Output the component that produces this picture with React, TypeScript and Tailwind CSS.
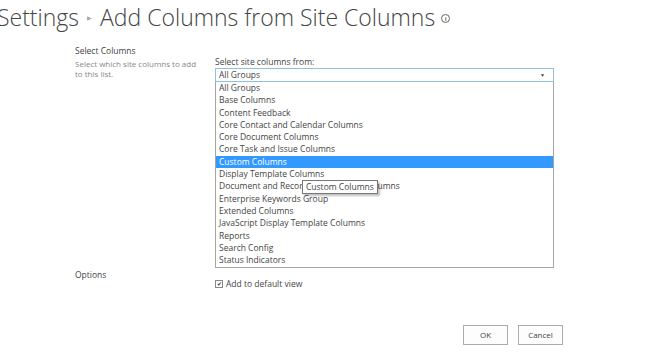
const GROUPS = [
  "All Groups",
  "Base Columns",
  "Content Feedback",
  "Core Contact and Calendar Columns",
  "Core Document Columns",
  "Core Task and Issue Columns",
  "Custom Columns",
  "Display Template Columns",
  "Document and Record Management Columns",
  "Enterprise Keywords Group",
  "Extended Columns",
  "JavaScript Display Template Columns",
  "Reports",
  "Search Config",
  "Status Indicators",
];

const SELECTED = "Custom Columns";

export default function App() {
  return (
    <div className="h-[359px] w-[650px] overflow-hidden bg-white font-['Open_Sans',sans-serif] text-[#444]">
      {/* Page title */}
      <div className="ml-[-3px] flex items-center text-[23px] font-light leading-[30px] text-[#444]">
        <span>Settings</span>
        <span className="mx-[8px] mt-[3px] text-[6px] text-[#aaa]">▶</span>
        <span>Add Columns from Site Columns</span>
        <span className="ml-[6px] mt-[4px] flex h-[9px] w-[9px] items-center justify-center rounded-full border border-[#666] text-[6px] font-bold leading-none text-[#666]">
          i
        </span>
      </div>

      <div className="mt-[12px] grid grid-cols-[140px_339px] pl-[75px] text-[8.5px]">
        {/* Select Columns */}
        <div>
          <div className="leading-[12px] text-[#444]">Select Columns</div>
          <div className="mt-[2px] w-[125px] text-[8px] leading-[10px] text-[#888]">
            Select which site columns to add to this list.
          </div>
        </div>
        <div className="pt-[11px]">
          <div className="leading-[12px]">Select site columns from:</div>
          <div className="flex h-[14px] items-center justify-between border border-[#92c0e0] pl-[3px] pr-[8px] leading-none">
            <span>All Groups</span>
            <span className="text-[5px] text-[#444]">▼</span>
          </div>
          <div className="relative border border-t-0 border-[#a6a6a6] pb-[1px]">
            {GROUPS.map((g) => (
              <div
                key={g}
                className={
                  g === SELECTED
                    ? "h-[12.3px] bg-[#3399ff] pl-[3px] leading-[12.3px] text-white"
                    : "h-[12.3px] pl-[3px] leading-[12.3px] text-[#444]"
                }
              >
                {g}
              </div>
            ))}
            {/* hover tooltip */}
            <div className="absolute left-[86px] top-[98px] border border-[#767676] bg-white px-[3px] leading-[12px] text-[#444] shadow-[2px_2px_2px_rgba(0,0,0,0.25)]">
              Custom Columns
            </div>
          </div>
        </div>

        {/* Options */}
        <div className="pt-[1px] leading-[12px] text-[#444]">Options</div>
        <div className="pt-[10px]">
          <label className="flex items-center gap-[3px] leading-[12px]">
            <span className="flex h-[8px] w-[8px] items-center justify-center border border-[#888] bg-white text-[6px] leading-none text-[#333]">
              ✔
            </span>
            <span>Add to default view</span>
          </label>
        </div>
      </div>

      {/* Buttons */}
      <div className="mt-[35px] flex gap-[10px] pl-[463px] text-[8px]">
        <button className="h-[20px] w-[45px] border border-[#ababab] bg-[#fdfdfd] text-[#444]">
          OK
        </button>
        <button className="h-[20px] w-[45px] border border-[#ababab] bg-[#fdfdfd] text-[#444]">
          Cancel
        </button>
      </div>
    </div>
  );
}
